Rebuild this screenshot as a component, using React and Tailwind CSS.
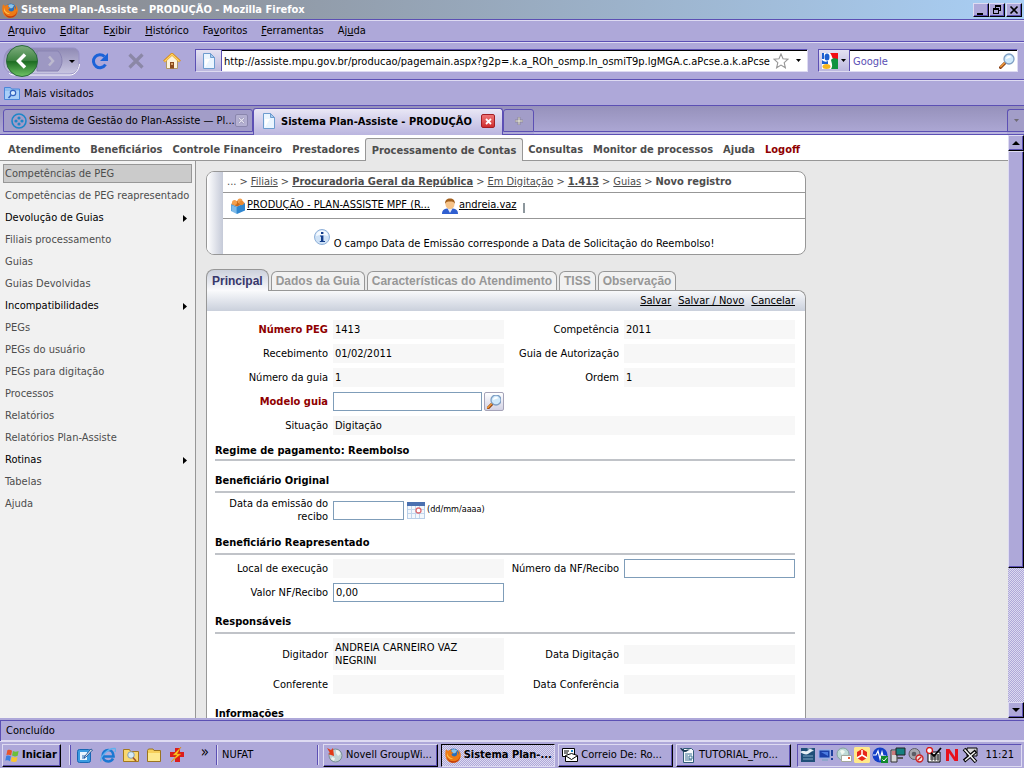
import React from "react";

const BEVEL =
  "border border-t-[#dedbf2] border-l-[#dedbf2] border-r-black border-b-black shadow-[inset_-1px_-1px_0_#5c50b4]";
const SUNKEN =
  "border border-t-[#5c50b4] border-l-[#5c50b4] border-r-[#dedbf2] border-b-[#dedbf2]";

function FirefoxIcon() {
  return (
    <svg viewBox="0 0 16 16" className="size-4 shrink-0" aria-hidden="true">
      <circle cx="8.500" cy="7.500" r="6" fill="#2c6fb8" />
      <path d="M6 3c2-1.500 5-1 6.500 1-1 0-1.500.5-1.500 1.500l-2 1-2-1z" fill="#8cc4ea" />
      <path
        d="M1 2.500C2 3 2.500 3.200 3 4c1-1 2.500-1.500 4-1.200C6 3.500 6 4.500 6.500 5.200l1.700.3c-.2 1-1.700 1.300-1.700 2 .5 2 3 2.500 4.500 1.500 1.500-1 1.500-3.500.5-5C13 5 13.500 6.500 13.300 8c.8-1.500.7-3.500-.3-5.500 2.500 2 3.500 5.500 2.300 8.500A7.700 7.700 0 0 1 1.200 11.500C0 9 0 5 1 2.500z"
        fill="#ee7b16"
      />
      <path d="M2 10c1.500 3.500 5 5 8.500 4 2.500-.8 4-2.500 4.500-5 .3 3.500-2.500 6.700-6.500 6.800C5.500 15.800 2.500 13.500 2 10z" fill="#c23c0e" />
      <path d="M2 5.500c.5 3 2.500 5.500 6 6.200-2.500.7-5-.5-6-3z" fill="#ffc04a" />
    </svg>
  );
}

function PageIcon() {
  return (
    <svg viewBox="0 0 16 16" className="size-4 shrink-0" aria-hidden="true">
      <path d="M2.500.5h7l4 4v11h-11z" fill="#eaf5ff" stroke="#6d9ccf" />
      <path d="M9.500.5v4h4z" fill="#a9cdf0" stroke="#6d9ccf" />
      <path d="M4 6h5l-5 8z" fill="#fff" />
    </svg>
  );
}

function Magnifier() {
  return (
    <svg viewBox="0 0 16 16" className="size-4 shrink-0" aria-hidden="true">
      <path d="M6.500 9.500 1.500 14.500" stroke="#8a3f12" strokeWidth="3" strokeLinecap="round" />
      <path d="M6.500 9 1.800 13.700" stroke="#f09a3c" strokeWidth="1.600" strokeLinecap="round" />
      <circle cx="10" cy="6" r="5" fill="#cfe9fb" stroke="#7f9fc4" strokeWidth="1.300" />
      <path d="M7 6c0-2 1.500-3 3-3 1.200 0 2 .5 2.500 1.200C11 4.500 9 5 7 6z" fill="#fff" />
    </svg>
  );
}

function DownCaret() {
  return (
    <svg viewBox="0 0 5 3" className="h-[3px] w-[5px]" aria-hidden="true">
      <path d="M0 0h5L2.500 3z" fill="currentColor" />
    </svg>
  );
}

function TitleBar() {
  const btn = `flex h-[14px] w-4 items-center justify-center bg-[#aea8d9] ${BEVEL}`;
  return (
    <header className="flex h-[19px] items-center gap-px bg-linear-to-r from-[#87878b] to-[#a9cff5] pr-[2px] pl-[2px]">
      <FirefoxIcon />
      <h1 className="min-w-0 flex-1 truncate pl-[2px] text-[11px] leading-4 font-bold text-white">
        Sistema Plan-Assiste - PRODUÇÃO - Mozilla Firefox
      </h1>
      <div className="flex">
        <button className={btn} aria-label="Minimizar">
          <svg viewBox="0 0 10 10" className="size-[10px]"><path d="M1 8h6v2H1z" /></svg>
        </button>
        <button className={btn} aria-label="Restaurar">
          <svg viewBox="0 0 10 10" className="size-[10px]">
            <path d="M3 0h6v6H7V5h1V2H4v1H3zM1 3h6v6H1zM2 5v3h4V5z" fillRule="evenodd" />
          </svg>
        </button>
      </div>
      <button className={btn} aria-label="Fechar">
        <svg viewBox="0 0 10 10" className="size-[10px]"><path d="M1.500 1.500l7 7M8.500 1.500l-7 7" stroke="#000" strokeWidth="1.700" /></svg>
      </button>
    </header>
  );
}

const MENUS = [
  ["", "A", "rquivo"],
  ["", "E", "ditar"],
  ["E", "x", "ibir"],
  ["", "H", "istórico"],
  ["Fa", "v", "oritos"],
  ["", "F", "erramentas"],
  ["Aj", "u", "da"],
];

function MenuBar() {
  return (
    <nav className="flex h-[23px] items-center gap-[14px] border-t border-b border-[#5c50b4] px-2 pt-px shadow-[inset_0_1px_0_#dedbf2]">
      {MENUS.map(([a, u, b]) => (
        <button key={a + u + b} className="leading-4">
          {a}
          <span className="underline">{u}</span>
          {b}
        </button>
      ))}
    </nav>
  );
}

function NavBar() {
  return (
    <div className="flex h-[38px] items-center border-b border-[#5c50b4] pr-[6px] pl-[3px] shadow-[inset_0_1px_0_#dedbf2]">
      <svg viewBox="0 0 77 34" className="h-[34px] w-[77px] shrink-0" role="img" aria-label="Voltar e avançar">
        <defs>
          <linearGradient id="keyhole" x1="0" y1="0" x2="0" y2="1">
            <stop offset="0" stopColor="#8f8ab4" />
            <stop offset="1" stopColor="#c9c6e2" />
          </linearGradient>
          <linearGradient id="back" x1="0" y1="0" x2="0" y2="1">
            <stop offset="0" stopColor="#7fae7f" />
            <stop offset="0.480" stopColor="#3f8442" />
            <stop offset="0.520" stopColor="#1d6c22" />
            <stop offset="1" stopColor="#6fc465" />
          </linearGradient>
        </defs>
        <path d="M10 4h60c4 0 6 3 6 7v8c0 6-3 11-9 11H12C4 29 0 24 1 17 1 10 4 5 10 4z" fill="url(#keyhole)" stroke="#9690c4" />
        <path d="M6 29c2 2 4 2 6 2h55c5 0 9-5 9.500-11" fill="none" stroke="#fff" />
        <path d="M34 7h21c3 3 4 7 4 10s-1 6-4 10H34z" fill="#9d98c3" stroke="#8983b3" />
        <path d="M46 12.500l4 4.500-4 4.500" fill="none" stroke="#bdbacf" strokeWidth="2.500" />
        <circle cx="19" cy="17" r="15.500" fill="url(#back)" stroke="#2a6a3c" />
        <path d="M22 10.500 15.500 17l6.500 6.500" fill="none" stroke="#fff" strokeWidth="3.500" />
        <path d="M66 16h6l-3 3z" />
      </svg>
      <button className="ml-[11px] shrink-0" aria-label="Recarregar">
        <svg viewBox="0 0 18 18" className="size-[18px]">
          <path d="M14.500 12.500A6.500 6.500 0 1 1 13.500 4.500" fill="none" stroke="#1b62d8" strokeWidth="3" />
          <path d="M17 1v8H9z" fill="#1b62d8" />
        </svg>
      </button>
      <button className="ml-[19px] shrink-0" aria-label="Parar">
        <svg viewBox="0 0 16 16" className="size-4"><path d="M1.500 1.500l13 13M14.500 1.500l-13 13" stroke="#8b87a6" strokeWidth="3.200" /></svg>
      </button>
      <button className="ml-[19px] shrink-0" aria-label="Página inicial">
        <svg viewBox="0 0 18 16" className="h-4 w-[18px]">
          <path d="M3.500 7 9 2l5.500 5v8.500h-11z" fill="#fdf3dc" stroke="#b39763" />
          <path d="M1 8.500 9 1l8 7.500" fill="none" stroke="#d98b1c" strokeWidth="2.600" />
          <path d="M1.500 8.500 9 1.300l7.500 7.200" fill="none" stroke="#ffd766" strokeWidth="1.300" />
          <path d="M7 9h4v6.500H7z" fill="#8c4a1c" />
          <path d="M8 10h2v2H8z" fill="#d7a56b" />
        </svg>
      </button>
      <div className="ml-[14px] flex h-[23px] min-w-0 flex-1 items-stretch border border-t-[#5c50b4] border-l-[#5c50b4] border-r-[#dedbf2] border-b-[#dedbf2] bg-white shadow-[inset_1px_1px_0_#000]">
        <span className="flex w-[26px] shrink-0 items-center justify-center border-r border-[#5c50b4] bg-linear-to-b from-[#e4e2f2] to-[#bcb8de]">
          <PageIcon />
        </span>
        <input
          aria-label="Endereço"
          className="min-w-0 flex-1 bg-transparent pt-[3px] pl-[2px] outline-none"
          defaultValue="http://assiste.mpu.gov.br/producao/pagemain.aspx?g2p=.k.a_ROh_osmp.ln_osmiT9p.lgMGA.c.aPcse.a.k.aPcse"
        />
        <button className="pl-px" aria-label="Favoritar">
          <svg viewBox="0 0 16 16" className="size-4">
            <path d="M8 1l2 4.700 5 .5-3.800 3.400 1.200 5.200L8 12.100l-4.400 2.700 1.200-5.200L1 6.200l5-.5z" fill="#fff" stroke="#969696" strokeWidth="1.100" />
          </svg>
        </button>
        <button className="flex w-[18px] items-center justify-center" aria-label="Histórico de endereços"><DownCaret /></button>
      </div>
      <div className="ml-[10px] flex h-[23px] w-[200px] shrink-0 items-stretch border border-t-[#5c50b4] border-l-[#5c50b4] border-r-[#dedbf2] border-b-[#dedbf2] bg-white shadow-[inset_1px_1px_0_#000]">
        <button className="flex w-[31px] items-center gap-[3px] border-r border-[#5c50b4] bg-linear-to-b from-[#e4e2f2] to-[#bcb8de] pl-[3px]" aria-label="Mecanismo de busca">
          <svg viewBox="0 0 16 16" className="size-4 shrink-0">
            <path d="M0 0h16v16H0z" fill="#fff" />
            <path d="M0 0h2v6H0zM0 7c2 2 4 2 6 1v3H0z" fill="#1c5fd0" />
            <path d="M8 0h8v6h-4c-2 0-2-4-4-6z" fill="#f20d12" />
            <path d="M9 7c1-2 4-2 7-1v10H9c2-3 1-5 0-9z" fill="#0d9440" />
            <ellipse cx="5" cy="4" rx="2.500" ry="3.500" fill="#1c5fd0" />
            <ellipse cx="4.500" cy="13.500" rx="4" ry="2.500" fill="#f6b61e" />
          </svg>
          <DownCaret />
        </button>
        <input aria-label="Pesquisar" placeholder="Google" className="min-w-0 flex-1 bg-transparent pt-[3px] pl-[3px] outline-none placeholder:text-[#5a50b4]" />
        <button className="px-[2px]" aria-label="Buscar"><Magnifier /></button>
      </div>
    </div>
  );
}

function BookmarksBar() {
  return (
    <div className="flex h-[26px] items-center gap-[4px] border-b border-[#5c50b4] px-1 pt-px shadow-[inset_0_1px_0_#dedbf2]">
      <svg viewBox="0 0 16 14" className="h-[14px] w-4" aria-hidden="true">
        <path d="M.5 1.500h6l1 1.500h8v10.500H.5z" fill="#8fbdf0" stroke="#4a86d8" />
        <path d="M1 5h14v8H1z" fill="#a9cff8" />
        <circle cx="9" cy="7" r="2.700" fill="#d8ecff" stroke="#3263c0" strokeWidth="1.200" />
        <path d="M7 9.200 4.500 12" stroke="#3263c0" strokeWidth="1.600" />
      </svg>
      <button className="pt-[2px]">Mais visitados</button>
    </div>
  );
}

function TabStrip() {
  return (
    <div className="flex h-[29px] items-end border-b border-[#5c50b4] bg-linear-to-b from-[#9691bb] to-[#aea9d6] pl-[3px]">
      <div className="mb-[2px] flex h-[23px] w-[250px] items-center rounded-t-[3px] border border-[#5c50b4] bg-[#a29dc8] pr-[4px] pl-[7px]">
        <svg viewBox="0 0 16 16" className="size-4 shrink-0" aria-hidden="true">
          <circle cx="8" cy="8" r="7" fill="none" stroke="#1c86c8" strokeWidth="1.600" />
          <circle cx="8" cy="5" r="1.600" fill="#1c86c8" />
          <circle cx="5" cy="8" r="1.600" fill="#1c86c8" />
          <circle cx="11" cy="8" r="1.600" fill="#1c86c8" />
          <circle cx="8" cy="11" r="1.600" fill="#1c86c8" />
        </svg>
        <span className="min-w-0 flex-1 pt-[2px] pl-[2px] whitespace-nowrap">Sistema de Gestão do Plan-Assiste — Pl...</span>
        <button aria-label="Fechar aba" className="flex size-[13px] shrink-0 items-center justify-center rounded-[2px] border border-[#8a86ad] bg-[#b4b0d2]">
          <svg viewBox="0 0 7 7" className="size-[7px]"><path d="M1 1l5 5M6 1 1 6" stroke="#8581a5" strokeWidth="2.200" /><path d="M1 1l5 5M6 1 1 6" stroke="#e6e4f2" strokeWidth="1.200" /></svg>
        </button>
      </div>
      <div className="-mb-px flex h-[27px] w-[250px] items-center gap-[4px] rounded-t-[3px] border border-b-0 border-[#5c50b4] bg-linear-to-b from-[#e9e7f5] to-[#bab5df] px-[7px] pb-[2px] font-bold">
        <PageIcon />
        <span className="min-w-0 flex-1 truncate pt-[2px]">Sistema Plan-Assiste - PRODUÇÃO</span>
        <button aria-label="Fechar aba" className="flex size-[14px] shrink-0 items-center justify-center rounded-[2px] border border-[#a31f24] bg-linear-to-b from-[#ee7577] to-[#cf2a2e]">
          <svg viewBox="0 0 7 7" className="size-[7px]"><path d="M1 1l5 5M6 1 1 6" stroke="#fff" strokeWidth="1.800" /></svg>
        </button>
      </div>
      <button aria-label="Nova aba" className="mb-[2px] flex h-[23px] w-[31px] items-center justify-center rounded-t-[3px] border border-[#5c50b4] bg-[#a29dc8]">
        <svg viewBox="0 0 8 8" className="size-2"><path d="M3 0h2v3h3v2H5v3H3V5H0V3h3z" fill="#d6d4cb" stroke="#87838f" strokeWidth="0.700" /></svg>
      </button>
      <div className="h-[3px] flex-1 self-end border-t border-[#5c50b4] bg-[#bab5df]" />
      <button aria-label="Listar abas" className="mb-[2px] flex h-[23px] w-[17px] items-center justify-center rounded-tl-[3px] border border-r-0 border-[#5c50b4] bg-[#a29dc8] text-[#6f6b74]">
        <DownCaret />
      </button>
    </div>
  );
}

const MODULES = [
  "Atendimento",
  "Beneficiários",
  "Controle Financeiro",
  "Prestadores",
  "Processamento de Contas",
  "Consultas",
  "Monitor de processos",
  "Ajuda",
  "Logoff",
];

function ModuleMenu() {
  return (
    <nav className="flex h-[26px] items-end border-b border-[#979797] bg-white pl-[3px] font-bold text-[#4d4d4d]">
      {MODULES.map((m) => {
        const current = m === "Processamento de Contas";
        return (
          <a
            key={m}
            href="#"
            className={
              current
                ? "-mb-px h-[23px] rounded-t-[3px] border border-b-0 border-[#979797] bg-[#e8e8e8] px-[6px] pt-[4px] leading-4 whitespace-nowrap"
                : m === "Logoff"
                  ? "px-[5px] pb-[2px] leading-4 whitespace-nowrap text-[#8f0000]"
                  : "px-[5px] pb-[2px] leading-4 whitespace-nowrap"
            }
          >
            {m}
          </a>
        );
      })}
    </nav>
  );
}

const SIDE = [
  { t: "Competências de PEG", current: true },
  { t: "Competências de PEG reapresentado" },
  { t: "Devolução de Guias", sub: true },
  { t: "Filiais processamento" },
  { t: "Guias" },
  { t: "Guias Devolvidas" },
  { t: "Incompatibilidades", sub: true },
  { t: "PEGs" },
  { t: "PEGs do usuário" },
  { t: "PEGs para digitação" },
  { t: "Processos" },
  { t: "Relatórios" },
  { t: "Relatórios Plan-Assiste" },
  { t: "Rotinas", sub: true },
  { t: "Tabelas" },
  { t: "Ajuda" },
];

function Sidebar() {
  return (
    <nav className="flex w-[196px] shrink-0 flex-col gap-[3px] border-r border-[#979797] bg-[#f1f1f1] px-[3px] pt-[3px]">
      {SIDE.map(({ t, current, sub }) => (
        <a
          key={t}
          href="#"
          className={
            "flex h-[19px] items-center justify-between border pt-[2px] pr-[4px] pl-[1px] whitespace-nowrap " +
            (current ? "border-[#979797] bg-[#cbcbcb] text-[#4d4d4d]" : sub ? "border-transparent text-black" : "border-transparent text-[#4d4d4d]")
          }
        >
          {t}
          {sub && (
            <svg viewBox="0 0 4 7" className="h-[7px] w-1" aria-hidden="true"><path d="M0 0l4 3.500L0 7z" /></svg>
          )}
        </a>
      ))}
    </nav>
  );
}

function ContextPanel() {
  return (
    <section className="flex overflow-hidden rounded-lg border border-[#979797] bg-white">
      <div className="w-4 shrink-0 bg-linear-to-r from-white to-[#c5cad8]" />
      <div className="min-w-0 flex-1">
        <nav className="flex h-[21px] items-center gap-[3px] border-b border-[#979797] pt-px pl-1 whitespace-nowrap text-[#4d4d4d]">
          <span>...</span>
          <span>&gt;</span>
          <a href="#" className="underline">Filiais</a>
          <span>&gt;</span>
          <a href="#" className="font-bold underline">Procuradoria Geral da República</a>
          <span>&gt;</span>
          <a href="#" className="underline">Em Digitação</a>
          <span>&gt;</span>
          <a href="#" className="font-bold underline">1.413</a>
          <span>&gt;</span>
          <a href="#" className="underline">Guias</a>
          <span>&gt;</span>
          <span className="font-bold">Novo registro</span>
        </nav>
        <div className="flex h-[26px] items-center border-b border-[#979797] pl-[7px]">
          <svg viewBox="0 0 16 16" className="size-4 shrink-0" aria-hidden="true">
            <path d="M1 6l6 2.500V16L1 13z" fill="#5ba6e0" />
            <path d="M7 8.500 15 5v7.500L7 16z" fill="#2f86cf" />
            <path d="M1 6l7-3.500L15 5 7 8.500z" fill="#c9681a" />
            <circle cx="4.500" cy="4.500" r="2.500" fill="#f4a04c" />
            <circle cx="10" cy="3" r="2.500" fill="#f4a04c" />
            <circle cx="11.500" cy="5" r="2.300" fill="#e98a30" />
            <path d="M3 8v6M5 9v6" stroke="#b5d9f5" strokeWidth="0.800" />
          </svg>
          <a href="#" className="ml-px underline">PRODUÇÃO - PLAN-ASSISTE MPF (R...</a>
          <svg viewBox="0 0 16 16" className="ml-3 size-4 shrink-0" aria-hidden="true">
            <path d="M0 16c0-4 2-5 5-5.500h6c3 .5 5 1.500 5 5.500z" fill="#2f5fd0" />
            <path d="M5.500 10.500h5L8 15z" fill="#e9edf8" />
            <circle cx="8" cy="6.500" r="4.500" fill="#f7c489" />
            <path d="M3 6c0-4 2-5.500 5-5.500S13 2 13 6c-1-2-2-2.500-5-2.500S4 4 3 6z" fill="#a4601c" />
          </svg>
          <a href="#" className="ml-px underline">andreia.vaz</a>
          <span className="mt-[5px] ml-[6px] h-[10px] w-[2px] bg-[#8d979d]" />
        </div>
        <div className="flex h-[35px] items-center justify-center gap-1">
          <svg viewBox="0 0 16 16" className="size-4 shrink-0" aria-hidden="true">
            <circle cx="8" cy="8" r="7.500" fill="#cfe2f6" stroke="#8fb0d8" />
            <path d="M2 7a6 5.500 0 0 1 12 0c-3-1.500-9-1.500-12 0z" fill="#f4f9fe" />
            <path d="M7 3h2.400v2H7zM6 6.500h3.400V12H11v1H5.800v-1H7V7.500H6z" fill="#123d8c" />
          </svg>
          <p className="pt-4 whitespace-nowrap">O campo Data de Emissão corresponde a Data de Solicitação do Reembolso!</p>
        </div>
      </div>
    </section>
  );
}

function Value({ children }) {
  return <div className="flex min-h-[19px] items-center bg-[#f7f7f7] px-[2px] leading-[13px]">{children}</div>;
}

const LABEL = "pr-[5px] text-right leading-[13px]";
const REQUIRED = "pr-[5px] text-right leading-[13px] font-bold text-[#8f0000]";
const INPUT = "h-[19px] w-full min-w-0 border border-[#7f9db9] bg-white px-[2px] outline-none";
const GRID = "grid grid-cols-[118px_1fr_120px_1fr] items-center gap-y-[5px]";
const HEADING = "border-b-2 border-[#c0c3c8] pt-[13px] pb-[3px] leading-[14px] font-bold";

function FormPanel() {
  const tabs = ["Dados da Guia", "Características do Atendimento", "TISS", "Observação"];
  return (
    <section className="mt-[14px] text-black">
      <div role="tablist" className="flex items-end gap-[2px] font-['Liberation_Sans',sans-serif] text-[12px] font-bold">
        <button role="tab" aria-selected="true" className="relative -mb-px h-[22px] rounded-t-lg border border-b-0 border-[#979797] bg-linear-to-b from-[#ccd1dc] to-[#fbfbfd] px-[5px] text-[#37376b]">
          Principal
        </button>
        {tabs.map((t) => (
          <button key={t} role="tab" aria-selected="false" className="h-[19px] rounded-t-md border border-b-0 border-[#979797] bg-[#f1f1f1] px-[4px] whitespace-nowrap text-[#979797]">
            {t}
          </button>
        ))}
      </div>
      <div className="rounded-tr-lg border border-b-0 border-[#979797] bg-white">
        <div className="flex h-5 items-center justify-end gap-[7px] rounded-tr-lg bg-linear-to-b from-[#f8f9fb] to-[#cad0dc] pr-[10px]">
          <a href="#" className="underline">Salvar</a>
          <a href="#" className="underline">Salvar / Novo</a>
          <a href="#" className="underline">Cancelar</a>
        </div>
        <form className="pt-[9px] pr-[10px] pb-6 pl-[8px]">
          <div className={GRID}>
            <span className={REQUIRED}>Número PEG</span>
            <Value>1413</Value>
            <span className={LABEL}>Competência</span>
            <Value>2011</Value>
            <span className={LABEL}>Recebimento</span>
            <Value>01/02/2011</Value>
            <span className={LABEL}>Guia de Autorização</span>
            <Value />
            <span className={LABEL}>Número da guia</span>
            <Value>1</Value>
            <span className={LABEL}>Ordem</span>
            <Value>1</Value>
            <label htmlFor="modelo" className={REQUIRED}>Modelo guia</label>
            <div className="col-span-3 grid grid-cols-[1fr_120px_1fr]">
              <div className="flex gap-[2px]">
                <input id="modelo" className={INPUT} />
                <button type="button" aria-label="Pesquisar modelo" className="flex h-[19px] w-5 shrink-0 items-center justify-center rounded-[2px] border border-[#a5a3b8] bg-linear-to-b from-white to-[#d3d2e4]">
                  <span className="flex size-[14px] items-center justify-center overflow-hidden"><Magnifier /></span>
                </button>
              </div>
            </div>
            <span className={LABEL}>Situação</span>
            <div className="col-span-3"><Value>Digitação</Value></div>
          </div>

          <h2 className="border-b-2 border-[#c0c3c8] pt-[9px] pb-px leading-[14px] font-bold">Regime de pagamento: Reembolso</h2>

          <h2 className={HEADING}>Beneficiário Original</h2>
          <div className={GRID + " mt-1"}>
            <label htmlFor="emissao" className={LABEL + " pl-2"}>Data da emissão do recibo</label>
            <div className="flex items-center gap-[2px]">
              <input id="emissao" className="h-[19px] w-[71px] shrink-0 border border-[#7f9db9] bg-white px-[2px] outline-none" />
              <button type="button" aria-label="Abrir calendário" className="ml-px">
                <svg viewBox="0 0 18 17" className="h-[17px] w-[18px]">
                  <path d="M0 0h18v17H0z" fill="#b9cfe8" />
                  <path d="M1 4h16v12H1z" fill="#f3f8fd" />
                  <path d="M0 0h18v4H0z" fill="#4a70b0" />
                  <path d="M4.500 4v12M8.500 4v12M12.500 4v12M1 7.500h16M1 11.500h16" stroke="#c3d6ec" />
                  <circle cx="11.500" cy="8.500" r="2.500" fill="#fff" stroke="#dd6a70" strokeWidth="1.300" />
                </svg>
              </button>
              <span className="text-[9px]">(dd/mm/aaaa)</span>
            </div>
          </div>

          <h2 className={HEADING}>Beneficiário Reapresentado</h2>
          <div className={GRID + " mt-1"}>
            <span className={LABEL}>Local de execução</span>
            <Value />
            <label htmlFor="nf" className={LABEL}>Número da NF/Recibo</label>
            <input id="nf" className={INPUT} />
            <label htmlFor="valor" className={LABEL}>Valor NF/Recibo</label>
            <input id="valor" defaultValue="0,00" className={INPUT} />
          </div>

          <h2 className={HEADING}>Responsáveis</h2>
          <div className={GRID + " mt-1"}>
            <span className={LABEL}>Digitador</span>
            <div className="bg-[#f7f7f7] py-[3px] pr-[30px] pl-[2px] leading-[13px]">ANDREIA CARNEIRO VAZ NEGRINI</div>
            <span className={LABEL}>Data Digitação</span>
            <Value />
            <span className={LABEL}>Conferente</span>
            <Value />
            <span className={LABEL}>Data Conferência</span>
            <Value />
          </div>

          <h2 className={HEADING}>Informações</h2>
        </form>
      </div>
    </section>
  );
}

function Scrollbar() {
  const btn = `flex h-4 w-full shrink-0 items-center justify-center bg-[#aea8d9] ${BEVEL}`;
  return (
    <div className="flex w-4 shrink-0 flex-col bg-[repeating-conic-gradient(#dcd9f0_0_25%,#aea8d9_0_50%)] bg-[length:2px_2px]">
      <button aria-label="Rolar para cima" className={btn}>
        <svg viewBox="0 0 8 4" className="h-1 w-2"><path d="M0 4h8L4 0z" /></svg>
      </button>
      <div className={`grow-[416] bg-[#aea8d9] ${BEVEL}`} />
      <div className="grow-[134]" />
      <button aria-label="Rolar para baixo" className={btn}>
        <svg viewBox="0 0 8 4" className="h-1 w-2"><path d="M0 0h8L4 4z" /></svg>
      </button>
    </div>
  );
}

function QuickLaunch() {
  return (
    <div className="flex gap-[7px]">
      <svg viewBox="0 0 16 16" className="size-4" aria-label="Área de trabalho" role="img">
        <rect x="0.500" y="2.500" width="13" height="13" rx="2" fill="#3a9be0" stroke="#1766b4" />
        <path d="M3 5h7v8H3z" fill="#eaf5ff" />
        <path d="M5 9h4M5 11h3" stroke="#2468b0" />
        <path d="M14 2 8 9l-1 2 2-1 6.500-7z" fill="#f4f4f4" stroke="#1c4f92" strokeWidth="0.900" />
      </svg>
      <svg viewBox="0 0 16 16" className="size-4" aria-label="Internet Explorer" role="img">
        <path d="M13 11.500C12 13.500 10.500 14.500 8.200 14.500 5 14.500 2.700 12 2.700 8.800S5 3 8.200 3s5.300 2.500 5.300 6.500H4" fill="none" stroke="#1c78d2" strokeWidth="2.700" />
        <path d="M1 14.500C-.5 11 7 1 15 1.500c1 1 .5 2.500 0 3.500" fill="none" stroke="#5fb0ee" strokeWidth="1.300" />
      </svg>
      <svg viewBox="0 0 16 16" className="size-4" aria-label="Explorar" role="img">
        <path d="M.5 2.500h6l1 2h8v10H.5z" fill="#f9d872" stroke="#a3781c" />
        <circle cx="8" cy="8" r="3.300" fill="#d4ebf8" stroke="#8a9fae" />
        <path d="m10 10.500 3 3.500" stroke="#a0522d" strokeWidth="1.600" />
      </svg>
      <svg viewBox="0 0 16 16" className="size-4" aria-label="Pasta" role="img">
        <path d="M1.500 3.500 2.500 2H7l1 1.500h6.500v11h-13z" fill="#f5cf5a" stroke="#9a7420" />
        <path d="M2 6h12v8H2z" fill="#fde98f" />
      </svg>
      <svg viewBox="0 0 16 16" className="size-4" aria-label="Atalho" role="img">
        <path d="M6 1h5v4h4v5h-4v5H6v-5H1V5h5z" fill="#dc1c1c" />
        <path d="M12 0 4 8h4l-6 7 10-8H8z" fill="#ffc828" stroke="#d88000" strokeWidth="0.500" />
      </svg>
    </div>
  );
}

function NovellIcon() {
  return (
    <svg viewBox="0 0 16 16" className="size-4 shrink-0" aria-hidden="true">
      <circle cx="8.500" cy="8.500" r="6.500" fill="#c2d3d6" stroke="#7a9096" />
      <path d="M9 3c3 0 4 2 4.500 4L11 9 9 6zM5 10l3 1-1 3-3-2z" fill="#f0f4ee" />
      <path d="M0 1l4 2 2-2 1 8-6-2 2-1z" fill="#e23a18" />
    </svg>
  );
}

function MailIcon() {
  return (
    <svg viewBox="0 0 16 16" className="size-4 shrink-0" aria-hidden="true">
      <path d="M.5 1.500h12v8H.5z" fill="#fff" stroke="#000" />
      <path d="M2 4h5M2 6h4" stroke="#000" />
      <path d="M9 3h2v2H9z" fill="#1e88c8" />
      <path d="M3.500 8.500l6-2 6 2v6h-12z" fill="#fff" stroke="#000" />
      <path d="m4 9 5.500 3.500L15 9" fill="none" stroke="#000" />
    </svg>
  );
}

function WriterIcon() {
  return (
    <svg viewBox="0 0 16 16" className="size-4 shrink-0" aria-hidden="true">
      <path d="M3.500 1.500h8l2 2v12h-10z" fill="#f6fafc" stroke="#315c78" />
      <path d="M0 1c3 0 3 2 5 2s3-1 5 0c-2 0-3 2-5 2S2 4 0 1z" fill="#1b3c56" />
      <path d="M5 7h7M5 9h3M5 11h3M5 13h7M9 9h3v3H9z" fill="none" stroke="#3c7394" />
    </svg>
  );
}

function Tray() {
  const s = "size-4 shrink-0";
  return (
    <div className={`ml-[7px] flex h-[23px] shrink-0 items-center gap-[2px] pr-[7px] pl-[2px] ${SUNKEN}`}>
      <svg viewBox="0 0 16 16" className={s} role="img" aria-label="OpenOffice">
        <path d="M1 1h14v14H1z" fill="#1f4f78" />
        <path d="M0 5c3-2 5 0 7-1s4-2 7 0c-3 0-4 2-6 3S3 7 0 5zM7 2c2-1 4 0 6 0-2 1-4 1-6 0z" fill="#e7f0f6" />
        <path d="M3 9h10M3 12h10" stroke="#7fa6c4" />
      </svg>
      <svg viewBox="0 0 16 16" className={s} role="img" aria-label="Rede">
        <path d="M1 3h11v8H1z" fill="#1c3fa8" stroke="#8db0e8" />
        <path d="M3 5l7 4V5z" fill="#4b7be0" />
        <path d="M4 12h6v2H4z" fill="#8fa6cc" />
        <path d="M13 3h2v6h-2zM13 11h2v2h-2z" fill="#1f3f9c" />
      </svg>
      <svg viewBox="0 0 16 16" className={s} role="img" aria-label="Correio">
        <circle cx="7" cy="7" r="6" fill="#bfd9d6" stroke="#82a29e" />
        <path d="M4 4c2-2 4-1 5 1L6 8z" fill="#f1f8f1" />
        <path d="M5.500 8.500h10v6h-10z" fill="#fff" stroke="#a4a89c" />
        <path d="M12 10h2v2h-2z" fill="#e65c38" />
      </svg>
      <svg viewBox="0 0 16 16" className={s} role="img" aria-label="Antivírus">
        <path d="M1 0h14l1 1v14l-1 1H1l-1-1V1z" fill="#ffe98a" />
        <path d="M8 2l5 3v6l-5 3-5-3V5z" fill="#e8261a" />
        <path d="M8 8V3M8 8l5 3M8 8l-5 3" stroke="#fff" strokeWidth="1.500" />
      </svg>
      <svg viewBox="0 0 16 16" className={s} role="img" aria-label="Monitor">
        <circle cx="8" cy="8" r="7.500" fill="#1340c8" />
        <path d="M1 8h3l2-4 2 8 2-7 1 4h3" fill="none" stroke="#fff" strokeWidth="1.200" />
        <path d="M9 9h7v7H9z" fill="#128a2c" />
        <path d="m10.500 12.500 1.500 1.500 3-3.500" fill="none" stroke="#fff" />
      </svg>
      <svg viewBox="0 0 16 16" className={s} role="img" aria-label="Servidor">
        <path d="M1 3h6v12H1z" fill="#d8d8d8" stroke="#333" />
        <path d="M2 5h4M2 7h4" stroke="#c02020" />
        <path d="M6 1h9v7H6z" fill="#168080" stroke="#222" />
        <path d="M7 10h6v2H7z" fill="#555" />
      </svg>
      <svg viewBox="0 0 16 16" className={s} role="img" aria-label="Som">
        <circle cx="6.500" cy="7" r="5.500" fill="#a7a7ae" stroke="#5d5d65" />
        <circle cx="6" cy="7" r="2.300" fill="#5d5d65" />
        <circle cx="11.500" cy="11.500" r="3.500" fill="#f3dede" stroke="#cf2424" strokeWidth="1.400" />
        <path d="m9.500 13.500 4-4" stroke="#cf2424" strokeWidth="1.300" />
      </svg>
      <svg viewBox="0 0 16 16" className={s} role="img" aria-label="Tarefas">
        <path d="M2 5h12v10H2z" fill="#fff" stroke="#000" />
        <path d="M4 8h9M4 10h9M4 12h9M6 7v7M9 7v7M12 7v7" stroke="#222" strokeWidth="0.900" />
        <circle cx="3.500" cy="3.500" r="3" fill="#fff" stroke="#d81818" strokeWidth="1.400" />
        <path d="M5 6l3 3 7-8" fill="none" stroke="#000" strokeWidth="1.800" />
      </svg>
      <svg viewBox="0 0 16 16" className={s} role="img" aria-label="Novell">
        <path d="M2 2h3.500l5.500 8V2h3v12h-3.500L5 6v8H2z" fill="#e8101c" />
      </svg>
      <svg viewBox="0 0 16 16" className={s} role="img" aria-label="Ferramentas">
        <path d="M5 1h10v8H5z" fill="#d8d8d8" stroke="#000" />
        <path d="M2 2l12 13M14 4 2 14" stroke="#000" strokeWidth="3.600" />
        <path d="M2.500 2.500l11 12M13 5 3 13.500" stroke="#f2f2f2" strokeWidth="1.600" />
      </svg>
      <time className="ml-[5px]">11:21</time>
    </div>
  );
}

function Taskbar() {
  const task = "flex h-[23px] min-w-0 max-w-[115px] flex-1 items-center gap-[3px] px-[3px] whitespace-nowrap";
  return (
    <footer className="flex h-[27px] items-center border-t border-[#dedbf2] px-[2px]">
      <button className={`flex h-[23px] w-[59px] shrink-0 items-center gap-[2px] pl-[2px] font-bold ${BEVEL}`}>
        <svg viewBox="0 0 16 16" className="size-[15px] shrink-0" aria-hidden="true">
          <path d="M2.500 2.500C4.500 1.500 6 2 7.500 3L6.500 8C5 7 3.500 7 1.500 7.700z" fill="#e8542a" />
          <path d="M8.500 3.300c2 1 3.500 1 6 0l-1 5c-2.500 1-4 .8-6-.2z" fill="#6bbf3a" />
          <path d="M1.300 8.600c2-.8 3.500-.6 5 .4l-1 5c-1.500-1-3-1.200-5-.4z" fill="#3c7fe0" />
          <path d="M7.300 9.300c2 1 3.700 1 6 .2l-1 5c-2.500.8-4 .6-6-.4z" fill="#fbc52c" />
        </svg>
        Iniciar
      </button>
      <div className="ml-[8px] h-5 w-[2px] shrink-0 border-l border-[#dedbf2] bg-[#5c50b4]" />
      <div className="flex w-[145px] shrink-0 items-center justify-between pl-[6px]">
        <QuickLaunch />
        <span className="pr-[7px] pb-[7px] text-[15px] leading-4">»</span>
      </div>
      <div className="h-5 w-[2px] shrink-0 border-l border-[#5c50b4] bg-[#dedbf2]" />
      <span className="w-[99px] shrink-0 pl-[4px]">NUFAT</span>
      <div className="h-5 w-[2px] shrink-0 border-l border-[#5c50b4] bg-[#dedbf2]" />
      <div className="ml-[4px] flex min-w-0 flex-1 gap-[3px]">
        <button className={`${task} ${BEVEL}`}><NovellIcon />Novell GroupWi...</button>
        <button className={`${task} border border-t-black border-l-black border-r-[#dedbf2] border-b-[#dedbf2] bg-[repeating-conic-gradient(#dcd9f0_0_25%,#aea8d9_0_50%)] bg-[length:2px_2px] font-bold`}>
          <FirefoxIcon />Sistema Plan-...
        </button>
        <button className={`${task} ${BEVEL}`}><MailIcon />Correio De: Ro...</button>
        <button className={`${task} ${BEVEL}`}><WriterIcon />TUTORIAL_Pro...</button>
      </div>
      <Tray />
    </footer>
  );
}

export default function App() {
  return (
    <div className="flex h-screen w-full flex-col overflow-hidden bg-[#aea8d9] font-['DejaVu_Sans_Condensed','DejaVu_Sans',sans-serif] text-[11px] text-black">
      <TitleBar />
      <MenuBar />
      <NavBar />
      <BookmarksBar />
      <TabStrip />
      <div className="flex min-h-0 flex-1">
        <div className="flex min-w-0 flex-1 flex-col overflow-hidden">
          <ModuleMenu />
          <div className="flex min-h-0 flex-1">
            <Sidebar />
            <main className="min-w-0 flex-1 overflow-hidden bg-[#e8e8e8] px-[10px] pt-[10px]">
              <div className="max-w-[600px]">
                <ContextPanel />
                <FormPanel />
              </div>
            </main>
          </div>
        </div>
        <Scrollbar />
      </div>
      <div className="mt-[2px] flex h-[21px] items-center border-t border-l border-[#5c50b4] pl-[5px] shadow-[inset_0_-1px_0_#dedbf2]">Concluído</div>
      <Taskbar />
    </div>
  );
}
